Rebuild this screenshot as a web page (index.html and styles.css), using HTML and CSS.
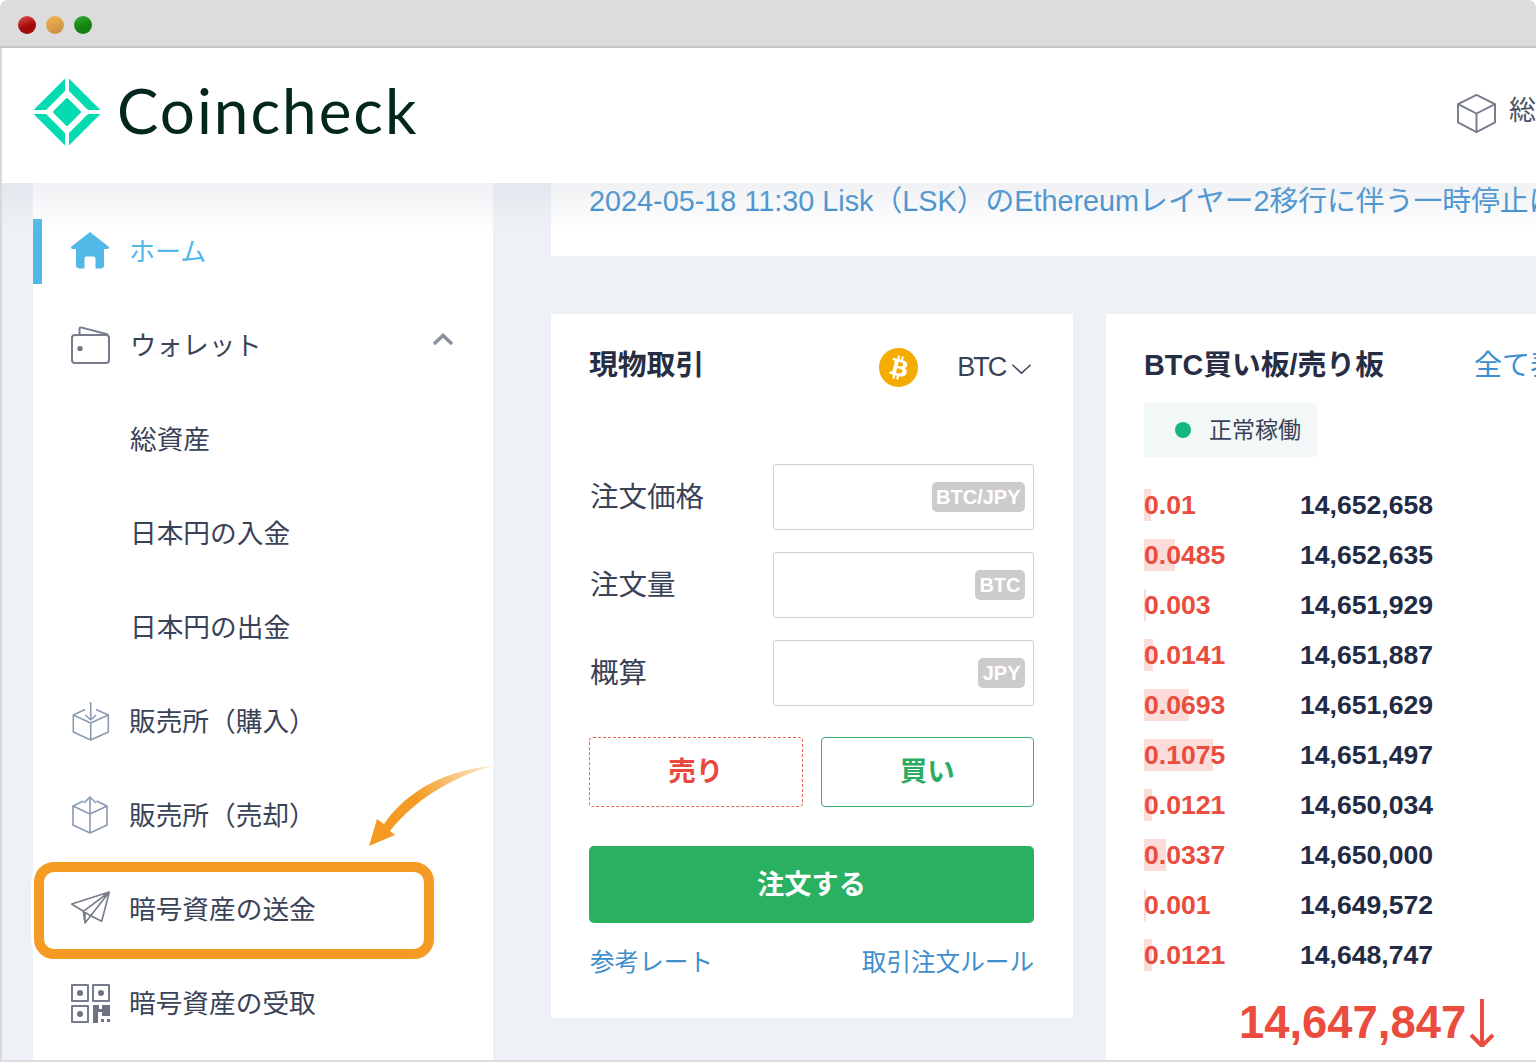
FILE: index.html
```html
<!DOCTYPE html>
<html lang="ja">
<head>
    <meta charset="UTF-8">
    <meta name="viewport" content="width=device-width, initial-scale=1.0">
    <title>Coincheck</title>
    <link rel="stylesheet" href="styles.css">
</head>
<body>
    <div class="window">
        <div class="titlebar">
            <span class="light light-red"></span>
            <span class="light light-amber"></span>
            <span class="light light-green"></span>
        </div>
        <div class="content">
            <header class="site-header">
                <div class="brand">
                    <svg class="brand-mark" viewBox="-34 -34 68 68">
                        <path d="M-2 -33.500 L-2 -21 L-21 -2 L-33.500 -2 Z"/>
                        <path d="M2 -33.500 L33.500 -2 L21 -2 L2 -21 Z"/>
                        <path d="M-33.500 2 L-21 2 L-2 21 L-2 33.500 Z"/>
                        <path d="M33.500 2 L2 33.500 L2 21 L21 2 Z"/>
                        <path class="brand-core" d="M0 -12.500 L12.500 0 L0 12.500 L-12.500 0 Z"/>
                    </svg>
                    <span class="brand-name">Coincheck</span>
                </div>
                <div class="total-link">
                    <svg class="total-icon" viewBox="0 0 40 40">
                        <path class="line-grey" d="M20 1 L39 10.5 V29 L20 39 L1 29 V10.5 Z M1 10.5 L20 20 L39 10.5 M20 20 V39"/>
                    </svg>
                    <span class="total-label">総資産</span>
                </div>
            </header>

            <div class="main-area">
                <div class="top-shade"></div>

                <nav class="sidebar">
                    <a class="nav-item active">
                        <svg class="icon" viewBox="0 0 40 40">
                            <path class="home-fill" fill-rule="evenodd" d="M20 1 L38.5 15.5 Q40 17.5 37.5 18 H34 V34 Q34 37.5 30.5 37.5 H25.5 V27.5 Q25.5 25.5 23.5 25.5 H16.5 Q14.5 25.5 14.5 27.5 V37.5 H9.5 Q6 37.5 6 34 V18 H2.5 Q0 17.5 1.5 15.5 Z"/>
                        </svg>
                        <span class="nav-label kana-label">ホーム</span>
                    </a>
                    <a class="nav-item">
                        <svg class="icon" viewBox="0 0 40 40">
                            <rect class="line-grey" x="2" y="10" width="37" height="28" rx="3"/>
                            <path class="line-grey" d="M9.500 10 V4 Q9.500 2 12 2.600 L38 9.500"/>
                            <circle class="dot-grey" cx="10" cy="23.500" r="2.600"/>
                        </svg>
                        <span class="nav-label wallet-label">ウォレット</span>
                        <svg class="nav-chevron" viewBox="0 0 22 13">
                            <path d="M2 11 L11 2.500 L20 11"/>
                        </svg>
                    </a>
                    <a class="nav-item sub-item"><span class="nav-label">総資産</span></a>
                    <a class="nav-item sub-item"><span class="nav-label">日本円の入金</span></a>
                    <a class="nav-item sub-item"><span class="nav-label">日本円の出金</span></a>
                    <a class="nav-item">
                        <svg class="icon" viewBox="0 0 40 40">
                            <path class="line-blue" d="M15 8.500 L3.300 14 V31 L20.700 39 L38.300 31 V14 L26 8.500 M3.300 14 L20.700 22 L38.300 14 M20.700 22 V39"/>
                            <path class="line-blue" d="M20.700 1 V19 M15.500 14 L20.700 19 L26 14"/>
                        </svg>
                        <span class="nav-label">販売所（購入）</span>
                    </a>
                    <a class="nav-item">
                        <svg class="icon" viewBox="0 0 40 40">
                            <path class="line-blue" d="M13.500 6 L3 11 V30 L20 38 L37 30 V11 L26.500 6 M3 11 L20 19 L37 11 M20 19 V38"/>
                            <path class="line-blue" d="M20 19 V2 M14 8 L20 2 L26 8"/>
                        </svg>
                        <span class="nav-label">販売所（売却）</span>
                    </a>
                    <a class="nav-item">
                        <svg class="icon" viewBox="0 0 40 40">
                            <path class="line-grey thin" d="M39.300 3 L1.700 15 L13.300 22.300 L15 34 L20.700 26.700 L31.700 32.300 Z M13.300 22.300 L39.300 3 L20.700 26.700 L15 23.500 L15 34"/>
                        </svg>
                        <span class="nav-label">暗号資産の送金</span>
                    </a>
                    <a class="nav-item">
                        <svg class="icon" viewBox="0 0 40 40">
                            <rect class="line-grey" x="2" y="2" width="16" height="16"/>
                            <rect class="line-grey" x="23" y="2" width="16" height="16"/>
                            <rect class="line-grey" x="2" y="23" width="16" height="16"/>
                            <circle class="dot-grey" cx="10" cy="10" r="3"/>
                            <circle class="dot-grey" cx="31" cy="10" r="3"/>
                            <circle class="dot-grey" cx="10" cy="31" r="3"/>
                            <path class="dot-grey" d="M23 22 H29 V26 H32 V22 H40 V33 H32 V29 H28 V40 H23 Z"/>
                            <rect class="dot-grey" x="31" y="36" width="3" height="3"/>
                            <rect class="dot-grey" x="37" y="36" width="3" height="3"/>
                        </svg>
                        <span class="nav-label">暗号資産の受取</span>
                    </a>
                </nav>

                <main class="main">
                    <div class="notice">2024-05-18 11:30 Lisk（LSK）のEthereumレイヤー2移行に伴う一時停止について</div>

                    <div class="panels">
                        <section class="panel order-panel">
                            <div class="panel-head">
                                <h2 class="panel-title">現物取引</h2>
                                <svg class="coin" viewBox="0 0 32 32">
                                    <circle cx="16" cy="16" r="16" fill="#f5ac00"/>
                                    <path fill="#fff" d="M23.189 14.02c.314-2.096-1.283-3.223-3.465-3.975l.708-2.84-1.728-.43-.69 2.765c-.454-.114-.92-.22-1.385-.326l.695-2.783L15.596 6l-.708 2.839c-.376-.086-.746-.17-1.104-.26l.002-.009-2.384-.595-.46 1.846s1.283.294 1.256.312c.7.175.826.638.805 1.006l-.806 3.235c.048.012.11.03.18.057l-.183-.045-1.13 4.532c-.086.212-.303.531-.793.41.018.025-1.256-.313-1.256-.313l-.858 1.978 2.25.561c.418.105.828.215 1.231.318l-.715 2.872 1.727.43.708-2.84c.472.127.93.245 1.378.357l-.706 2.828 1.728.43.715-2.866c2.948.558 5.164.333 6.097-2.333.752-2.146-.037-3.385-1.588-4.192 1.13-.26 1.98-1.003 2.207-2.538zm-3.95 5.538c-.533 2.147-4.148.986-5.32.695l.95-3.805c1.172.293 4.929.872 4.37 3.11zm.535-5.569c-.487 1.953-3.495.96-4.47.717l.86-3.45c.975.243 4.118.696 3.61 2.733z"/>
                                </svg>
                                <span class="coin-name">BTC</span>
                                <svg class="coin-chevron" viewBox="0 0 22 12">
                                    <path d="M1.500 1.500 L11 10.500 L20.500 1.500"/>
                                </svg>
                            </div>

                            <div class="order-form">
                                <label class="field-label">注文価格</label>
                                <div class="field"><span class="unit">BTC/JPY</span></div>
                                <label class="field-label">注文量</label>
                                <div class="field"><span class="unit">BTC</span></div>
                                <label class="field-label">概算</label>
                                <div class="field"><span class="unit">JPY</span></div>
                            </div>

                            <div class="side-buttons">
                                <button class="side-btn sell-btn">売り</button>
                                <button class="side-btn buy-btn">買い</button>
                            </div>
                            <button class="submit-btn">注文する</button>
                            <div class="panel-links">
                                <a>参考レート</a>
                                <a>取引注文ルール</a>
                            </div>
                        </section>

                        <section class="panel book-panel">
                            <div class="panel-head">
                                <h2 class="panel-title">BTC買い板/売り板</h2>
                                <a class="view-all">全て表示</a>
                            </div>
                            <div class="status-pill"><span class="status-dot"></span><span class="status-text">正常稼働</span></div>
                            <div class="book-rows">
                                <div class="book-row"><div class="qty"><span class="qty-bar" style="width:7px"></span><span class="qty-num">0.01</span></div><div class="price">14,652,658</div></div>
                                <div class="book-row"><div class="qty"><span class="qty-bar" style="width:31px"></span><span class="qty-num">0.0485</span></div><div class="price">14,652,635</div></div>
                                <div class="book-row"><div class="qty"><span class="qty-bar" style="width:2px"></span><span class="qty-num">0.003</span></div><div class="price">14,651,929</div></div>
                                <div class="book-row"><div class="qty"><span class="qty-bar" style="width:9px"></span><span class="qty-num">0.0141</span></div><div class="price">14,651,887</div></div>
                                <div class="book-row"><div class="qty"><span class="qty-bar" style="width:45px"></span><span class="qty-num">0.0693</span></div><div class="price">14,651,629</div></div>
                                <div class="book-row"><div class="qty"><span class="qty-bar" style="width:69px"></span><span class="qty-num">0.1075</span></div><div class="price">14,651,497</div></div>
                                <div class="book-row"><div class="qty"><span class="qty-bar" style="width:8px"></span><span class="qty-num">0.0121</span></div><div class="price">14,650,034</div></div>
                                <div class="book-row"><div class="qty"><span class="qty-bar" style="width:22px"></span><span class="qty-num">0.0337</span></div><div class="price">14,650,000</div></div>
                                <div class="book-row"><div class="qty"><span class="qty-bar" style="width:2px"></span><span class="qty-num">0.001</span></div><div class="price">14,649,572</div></div>
                                <div class="book-row"><div class="qty"><span class="qty-bar" style="width:8px"></span><span class="qty-num">0.0121</span></div><div class="price">14,648,747</div></div>
                            </div>
                            <div class="last-price">
                                <span>14,647,847</span>
                                <svg class="down-arrow" viewBox="0 0 24 48">
                                    <path d="M12 0 V47 M1 36 L12 47 L23 36"/>
                                </svg>
                            </div>
                        </section>
                    </div>
                </main>

                <!-- annotation drawn over the screenshot -->
                <div class="callout-box"></div>
                <svg class="callout-arrow" viewBox="368 765 126 84">
                    <defs>
                        <linearGradient id="arrow-fade" x1="493" y1="766" x2="395" y2="830" gradientUnits="userSpaceOnUse">
                            <stop offset="0" stop-color="#f59b23" stop-opacity="0.2"/>
                            <stop offset="0.7" stop-color="#f59b23"/>
                        </linearGradient>
                    </defs>
                    <path fill="url(#arrow-fade)" d="M493 766 C450 769 408 789 384 824 L377 819 L369 846 L395 835 L390 831 C412 803 448 778 493 766 Z"/>
                </svg>
            </div>
        </div>
    </div>
</body>
</html>
```

FILE: styles.css
```css
* {
    box-sizing: border-box;
}

body {
    margin: 0;
    background-color: #fff;
    color: #2c3348;
    font-family: "Liberation Sans", "Noto Sans CJK JP", sans-serif;
}

.window {
    width: 1536px;
    height: 1062px;
    display: flex;
    flex-direction: column;
    overflow: hidden;
    border-radius: 8px 8px 0 0;
}

/* window chrome */
.titlebar {
    height: 48px;
    flex-shrink: 0;
    display: flex;
    align-items: center;
    gap: 10px;
    padding: 4px 0 0 18px;
    background-color: #dcdcdc;
    border-bottom: 2px solid #c6c6c6;
}

.light {
    width: 18px;
    height: 18px;
    border-radius: 50%;
}

.light-red {
    background: linear-gradient(160deg, #e25555, #a30b0b 55%);
}

.light-amber {
    background: linear-gradient(160deg, #f2b54e, #c98b45);
}

.light-green {
    background: linear-gradient(160deg, #35ad35, #14800f 60%);
}

.content {
    flex: 1;
    min-height: 0;
    display: flex;
    flex-direction: column;
    border-left: 2px solid #d9d9d9;
    border-bottom: 2px solid #dcdcdc;
}

/* header */
.site-header {
    height: 135px;
    flex-shrink: 0;
    display: flex;
    align-items: center;
    justify-content: space-between;
    padding-left: 31px;
    background-color: #fff;
}

.brand {
    display: flex;
    align-items: center;
    gap: 17px;
    margin-bottom: 8px;
}

.brand-mark {
    width: 68px;
    height: 68px;
    fill: #05dbb0;
}

.brand-core {
    stroke: #05dbb0;
    stroke-width: 3;
    stroke-linejoin: round;
}

.brand-name {
    margin: 0 0 4px -1px;
    font-family: Lato, sans-serif;
    font-size: 62px;
    line-height: 68px;
    letter-spacing: 2px;
    color: #03261f;
}

.total-link {
    width: 79px;
    flex-shrink: 0;
    display: flex;
    align-items: center;
    gap: 13px;
    margin-bottom: 5px;
    overflow: hidden;
    font-size: 27px;
    white-space: nowrap;
    color: #4a5064;
}

.total-icon {
    width: 39px;
    height: 39px;
    flex-shrink: 0;
}

.total-label {
    margin-bottom: 9px;
}

.icon {
    width: 40px;
    height: 40px;
    flex-shrink: 0;
}

.line-grey {
    fill: none;
    stroke: #767c8c;
    stroke-width: 2;
    stroke-linejoin: round;
}

.line-grey.thin {
    stroke-width: 1.6;
}

.line-blue {
    fill: none;
    stroke: #8a9ab3;
    stroke-width: 1.6;
    stroke-linejoin: round;
}

.dot-grey {
    fill: #6d7383;
}

.home-fill {
    fill: #52b8e8;
}

/* below the header */
.main-area {
    position: relative;
    flex: 1;
    min-height: 0;
    display: flex;
    padding-left: 31px;
    overflow: hidden;
    background-color: #eef1f6;
}

.top-shade {
    position: absolute;
    top: 0;
    left: 0;
    right: 0;
    height: 48px;
    z-index: 2;
    background: linear-gradient(rgba(205, 211, 220, 0.32), rgba(205, 211, 220, 0));
}

/* sidebar */
.sidebar {
    width: 460px;
    flex-shrink: 0;
    padding-top: 21px;
    background-color: #fff;
}

.nav-item {
    position: relative;
    height: 94px;
    display: flex;
    align-items: center;
    gap: 20px;
    padding-left: 37px;
    font-size: 26.700px;
    color: #3a4257;
    white-space: nowrap;
}

.nav-label {
    margin: 0 0 4px -1px;
}

.kana-label {
    font-size: 26px;
}

.wallet-label {
    margin-left: 0;
    font-size: 26.300px;
}

.nav-item.active {
    color: #52b8e8;
}

.nav-item.active::before {
    content: "";
    position: absolute;
    left: 0;
    top: 15px;
    width: 9px;
    height: 65px;
    background-color: #52b8e8;
}

.sub-item {
    padding-left: 98px;
}

.nav-chevron {
    width: 22px;
    height: 13px;
    margin: 0 39px 11px auto;
    fill: none;
    stroke: #8a909c;
    stroke-width: 3.5;
}

/* main column */
.main {
    flex: 1;
    min-width: 0;
    margin-left: 58px;
}

.notice {
    height: 73px;
    padding-left: 38px;
    background-color: #fff;
    font-size: 28.800px;
    line-height: 36px;
    white-space: nowrap;
    overflow: hidden;
    color: #3388cc;
}

.panels {
    display: flex;
    gap: 33px;
    margin-top: 58px;
}

.panel {
    height: 704px;
    background-color: #fff;
}

.order-panel {
    width: 522px;
    flex-shrink: 0;
    padding: 30px 0 0 38px;
}

.book-panel {
    flex: 1;
    height: 760px;
    min-width: 0;
    padding: 30px 0 0 38px;
    white-space: nowrap;
    overflow: hidden;
}

.panel-head {
    height: 42px;
    display: flex;
    align-items: center;
}

.panel-title {
    margin: 0 0 6px;
    font-size: 28.800px;
    font-weight: bold;
    color: #272e44;
}

.coin {
    width: 39px;
    height: 39px;
    margin: 4px 0 0 175px;
}

.coin-name {
    margin: 4px 0 0 39px;
    font-size: 27px;
    letter-spacing: -2px;
    color: #3a4257;
}

.coin-chevron {
    width: 21px;
    height: 12px;
    margin: 8px 0 0 6px;
    fill: none;
    stroke: #3a4257;
    stroke-width: 1.6;
}

/* order form */
.order-form {
    width: 445px;
    display: grid;
    grid-template-columns: 184px 261px;
    grid-auto-rows: 66px;
    row-gap: 22px;
    align-items: center;
    margin-top: 78px;
}

.field-label {
    margin-bottom: 6px;
    padding-left: 1px;
    font-size: 28.500px;
    color: #3a4257;
}

.field {
    height: 66px;
    display: flex;
    align-items: center;
    justify-content: flex-end;
    padding: 0 8px 0 0;
    border: 1px solid #cfd0d3;
    border-radius: 3px;
}

.unit {
    height: 30px;
    padding: 0 4.500px;
    border-radius: 5px;
    background-color: #ccc;
    color: #fff;
    font-size: 20px;
    font-weight: bold;
    line-height: 30px;
}

.side-buttons {
    width: 445px;
    display: flex;
    gap: 18px;
    margin-top: 31px;
}

.side-btn {
    flex: 1;
    height: 70px;
    padding: 0 0 7px;
    background-color: #fff;
    border-radius: 4px;
    font-family: inherit;
    font-size: 27.500px;
    font-weight: bold;
}

.sell-btn {
    border: 1px dashed #e8665a;
    color: #e8493c;
}

.buy-btn {
    border: 1px solid #3fb573;
    color: #2bac62;
}

.submit-btn {
    display: block;
    width: 445px;
    height: 77px;
    margin-top: 39px;
    padding: 0 0 6px;
    border: none;
    border-radius: 5px;
    background-color: #2ab061;
    color: #fff;
    font-family: inherit;
    font-size: 27.200px;
    font-weight: bold;
}

.panel-links {
    width: 445px;
    display: flex;
    justify-content: space-between;
    margin-top: 22px;
    padding-left: 1px;
    font-size: 24.600px;
    line-height: 36px;
    color: #3f8ecb;
}

/* order book */
.view-all {
    margin: 0 0 4px 90px;
    font-size: 28px;
    color: #3d8fcf;
}

.status-pill {
    width: 173px;
    height: 54px;
    display: flex;
    align-items: center;
    gap: 18px;
    margin-top: 17px;
    padding-left: 31px;
    border-radius: 3px;
    background-color: #f2f8f8;
    font-size: 23px;
    color: #3a4257;
}

.status-dot {
    width: 16px;
    height: 16px;
    border-radius: 50%;
    background-color: #14b87f;
}

.status-text {
    margin-bottom: 4px;
}

.book-rows {
    display: flex;
    flex-direction: column;
    gap: 18px;
    margin-top: 32px;
}

.book-row {
    height: 32px;
    display: flex;
    font-size: 26.600px;
    font-weight: bold;
    line-height: 32px;
}

.qty {
    position: relative;
    width: 156px;
    color: #ea4c3d;
}

.qty-bar {
    position: absolute;
    left: 0;
    top: 0;
    height: 32px;
    background-color: #fbdcd9;
}

.qty-num {
    position: relative;
}

.price {
    color: #222b45;
}

.last-price {
    display: flex;
    align-items: center;
    gap: 4px;
    margin: 27px 0 0 95px;
    font-size: 45.400px;
    font-weight: bold;
    line-height: 50px;
    color: #ea4c3d;
}

.down-arrow {
    width: 24px;
    height: 48px;
    fill: none;
    stroke: #ea4c3d;
    stroke-width: 4;
}

/* annotation */
.callout-box {
    position: absolute;
    left: 32px;
    top: 679px;
    width: 400px;
    height: 97px;
    z-index: 3;
    border: 10px solid #f59b23;
    border-radius: 20px;
    box-shadow: 0 0 0 3px #fff;
}

.callout-arrow {
    position: absolute;
    left: 366px;
    top: 582px;
    width: 126px;
    height: 84px;
    z-index: 3;
}
```
